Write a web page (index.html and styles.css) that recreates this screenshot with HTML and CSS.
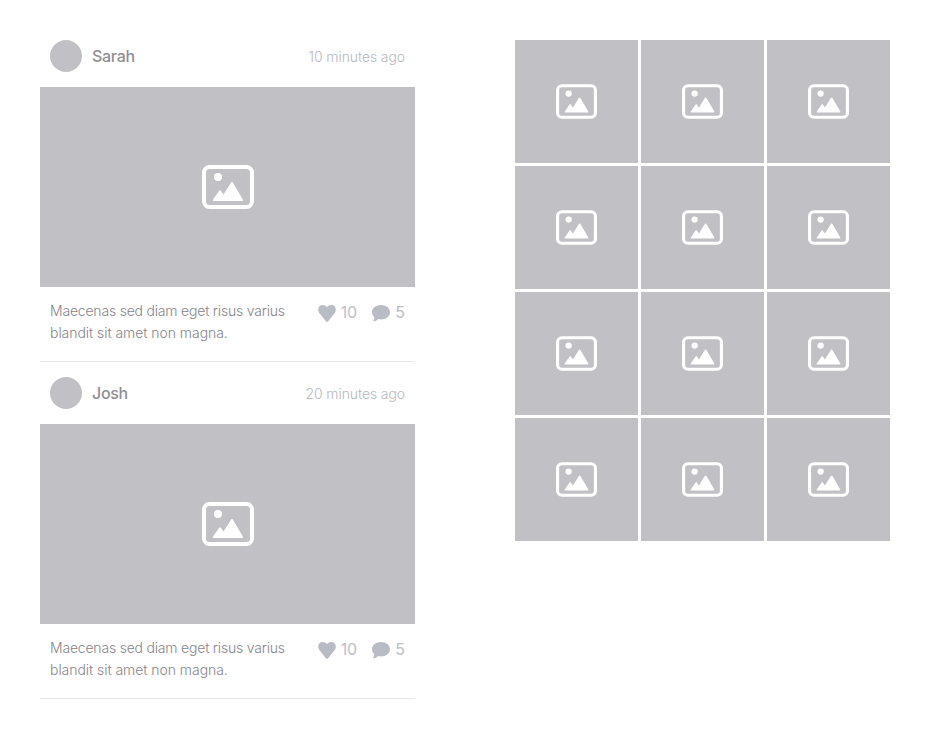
FILE: index.html
```html
<!DOCTYPE html>
<html lang="en">
<head>
<meta charset="utf-8">
<title>Photo feed</title>
<link rel="stylesheet" href="styles.css">
</head>
<body>
<svg class="sprite" aria-hidden="true">
  <symbol id="picture" viewBox="0 0 52 44">
    <rect x="2" y="2" width="48" height="40" rx="5.5" fill="none" stroke="#fff" stroke-width="4"/>
    <circle cx="16" cy="12" r="4" fill="#fff"/>
    <path d="M11.8 36Q10.2 36 11.1 34.6L17 26Q18 24.5 19 26L21.5 29.5L29 17.7Q30 16 31 17.7L40.8 34.4Q41.7 36 40 36Z" fill="#fff"/>
  </symbol>
  <symbol id="heart" viewBox="0 0 18 18">
    <path d="M9 18C8.3 18 7.7 17.3 7.2 16.6L1.7 9.6C.8 8.4 .2 7.1 .2 5.5C.2 2.9 2 1 4.6 1C6.6 1 8.2 1.9 9 3.3C9.8 1.9 11.4 1 13.4 1C16 1 17.8 2.9 17.8 5.5C17.8 7.1 17.2 8.4 16.3 9.6L10.8 16.6C10.3 17.3 9.7 18 9 18Z" fill="#babcc5"/>
  </symbol>
  <symbol id="comment" viewBox="0 0 18 18">
    <path d="M9 1C14 1 18 4 18 8.2S14 15.4 9 15.4Q7.6 15.4 6.3 15.1Q4.4 17.4 1.3 17.6Q.8 17.4 1.2 16.8Q2.3 15.2 2.3 13.2Q0 11.2 0 8.2C0 4 4 1 9 1Z" fill="#babcc5"/>
  </symbol>
</svg>
<main class="page">
  <section class="feed">
    <article class="post">
      <header class="post-header"><span class="avatar"></span><span class="name">Sarah</span><time class="time">10 minutes ago</time></header>
      <div class="photo"><svg class="picture"><use href="#picture"/></svg></div>
      <div class="post-body">
        <p class="caption">Maecenas sed diam eget risus varius<br><span class="caption-end">blandit sit amet non magna.</span></p>
        <div class="stats"><svg class="stat-icon"><use href="#heart"/></svg><span class="likes">10</span><svg class="stat-icon"><use href="#comment"/></svg><span class="comments">5</span></div>
      </div>
    </article>
    <article class="post">
      <header class="post-header"><span class="avatar"></span><span class="name">Josh</span><time class="time">20 minutes ago</time></header>
      <div class="photo"><svg class="picture"><use href="#picture"/></svg></div>
      <div class="post-body">
        <p class="caption">Maecenas sed diam eget risus varius<br><span class="caption-end">blandit sit amet non magna.</span></p>
        <div class="stats"><svg class="stat-icon"><use href="#heart"/></svg><span class="likes">10</span><svg class="stat-icon"><use href="#comment"/></svg><span class="comments">5</span></div>
      </div>
    </article>
  </section>
  <section class="gallery">
    <div class="tile"><svg class="thumb"><use href="#picture"/></svg></div>
    <div class="tile"><svg class="thumb"><use href="#picture"/></svg></div>
    <div class="tile"><svg class="thumb"><use href="#picture"/></svg></div>
    <div class="tile"><svg class="thumb"><use href="#picture"/></svg></div>
    <div class="tile"><svg class="thumb"><use href="#picture"/></svg></div>
    <div class="tile"><svg class="thumb"><use href="#picture"/></svg></div>
    <div class="tile"><svg class="thumb"><use href="#picture"/></svg></div>
    <div class="tile"><svg class="thumb"><use href="#picture"/></svg></div>
    <div class="tile"><svg class="thumb"><use href="#picture"/></svg></div>
    <div class="tile"><svg class="thumb"><use href="#picture"/></svg></div>
    <div class="tile"><svg class="thumb"><use href="#picture"/></svg></div>
    <div class="tile"><svg class="thumb"><use href="#picture"/></svg></div>
  </section>
</main>
</body>
</html>
```
FILE: styles.css
```css
* { box-sizing: border-box; }
body { margin: 0; background: #fff; font-family: Inter, "Liberation Sans", sans-serif; color: #85858a; }
.sprite { display: none; }
.page { display: flex; align-items: flex-start; gap: 100px; padding: 40px; }
.feed { width: 375px; display: flex; flex-direction: column; gap: 15px; }
.post { border-bottom: 1px solid #e8e8ea; }
.post-header { display: flex; align-items: center; height: 32px; margin: 0 10px 15px; }
.avatar { width: 32px; height: 32px; border-radius: 50%; background: #c1c0c5; margin-right: 10px; }
.name { font-size: 16px; font-weight: 500; letter-spacing: -0.3px; color: #8e8e93; }
.time { margin-left: auto; font-size: 14px; font-weight: 300; line-height: 20px; padding-top: 2px; letter-spacing: -0.1px; color: #b7b8c0; }
.photo { height: 200px; background: #c1c0c5; display: flex; align-items: center; justify-content: center; }
.picture { width: 52px; height: 44px; }
.post-body { height: 74px; padding: 13px 10px 0; display: flex; justify-content: space-between; }
.caption { margin: 0; font-size: 14px; font-weight: 300; line-height: 22px; letter-spacing: -0.2px; white-space: nowrap; }
.caption-end { letter-spacing: -0.05px; }
.stats { display: flex; align-items: center; height: 26px; font-size: 16px; color: #bdbec6; letter-spacing: -0.3px; }
.stat-icon { width: 18px; height: 18px; margin-right: 5px; }
.likes, .comments { line-height: 20px; padding-bottom: 2px; }
.likes { margin-right: 15px; }
.comments { margin: 0 .4px 0 .4px; }
.gallery { width: 375px; display: grid; grid-template-columns: repeat(3, 123px); grid-auto-rows: 123px; gap: 3px; }
.tile { background: #c1c0c5; display: flex; align-items: center; justify-content: center; }
.thumb { width: 41px; height: 35px; }
```
